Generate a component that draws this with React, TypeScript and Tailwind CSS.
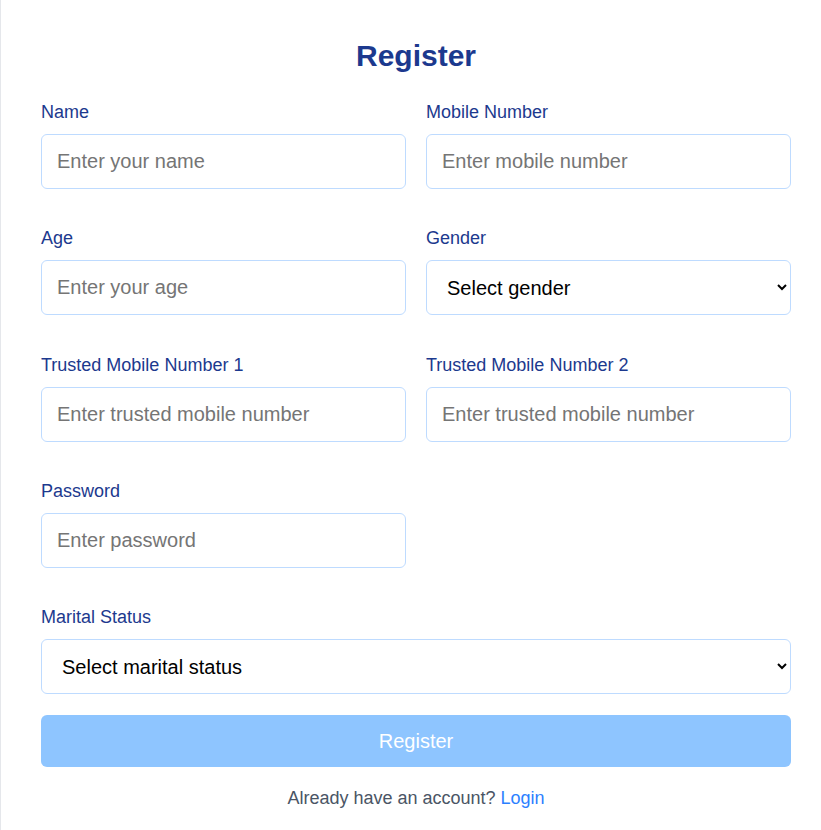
import type { ReactNode } from "react"

const inputCls =
  "block h-[55px] w-full rounded-md border border-blue-200 bg-white pl-[15px] pr-4 text-xl text-black outline-none placeholder:text-[#757575]"

const selectCls =
  "block h-[55px] w-full rounded-md border border-blue-200 bg-white pl-4 pr-2.5 text-xl text-black outline-none"

function Field({ label, children }: { label: string; children: ReactNode }) {
  return (
    <div>
      <label className="mb-2 block text-lg leading-7 text-blue-900">{label}</label>
      {children}
    </div>
  )
}

export default function App() {
  return (
    <div className="min-h-screen bg-white font-['Liberation_Sans',Arial,sans-serif]">
      <div className="min-h-[830px] border-l border-gray-200 pl-10 pt-[38px]">
        <div className="w-[750px]">
          <h1 className="mb-6 text-center text-3xl font-bold text-blue-900">Register</h1>

          <div className="grid grid-cols-2 gap-x-5 gap-y-[35.4px]">
            <Field label="Name">
              <input className={inputCls} placeholder="Enter your name" />
            </Field>
            <Field label="Mobile Number">
              <input className={inputCls} placeholder="Enter mobile number" />
            </Field>
            <Field label="Age">
              <input className={inputCls} placeholder="Enter your age" />
            </Field>
            <Field label="Gender">
              <select className={selectCls} defaultValue="">
                <option value="">Select gender</option>
                <option value="male">Male</option>
                <option value="female">Female</option>
                <option value="other">Other</option>
              </select>
            </Field>
            <Field label="Trusted Mobile Number 1">
              <input className={inputCls} placeholder="Enter trusted mobile number" />
            </Field>
            <Field label="Trusted Mobile Number 2">
              <input className={inputCls} placeholder="Enter trusted mobile number" />
            </Field>
            <Field label="Password">
              <input type="password" className={inputCls} placeholder="Enter password" />
            </Field>
          </div>

          <div className="mt-[35px]">
            <Field label="Marital Status">
              <select className={selectCls} defaultValue="">
                <option value="">Select marital status</option>
                <option value="single">Single</option>
                <option value="married">Married</option>
              </select>
            </Field>
          </div>

          <button className="mt-[21px] w-full rounded-md bg-blue-300 py-3 text-xl leading-7 text-white">
            Register
          </button>

          <p className="mt-[17px] text-center text-lg leading-7 text-gray-600">
            Already have an account? <a href="#" className="text-blue-500">Login</a>
          </p>
        </div>
      </div>
    </div>
  )
}
